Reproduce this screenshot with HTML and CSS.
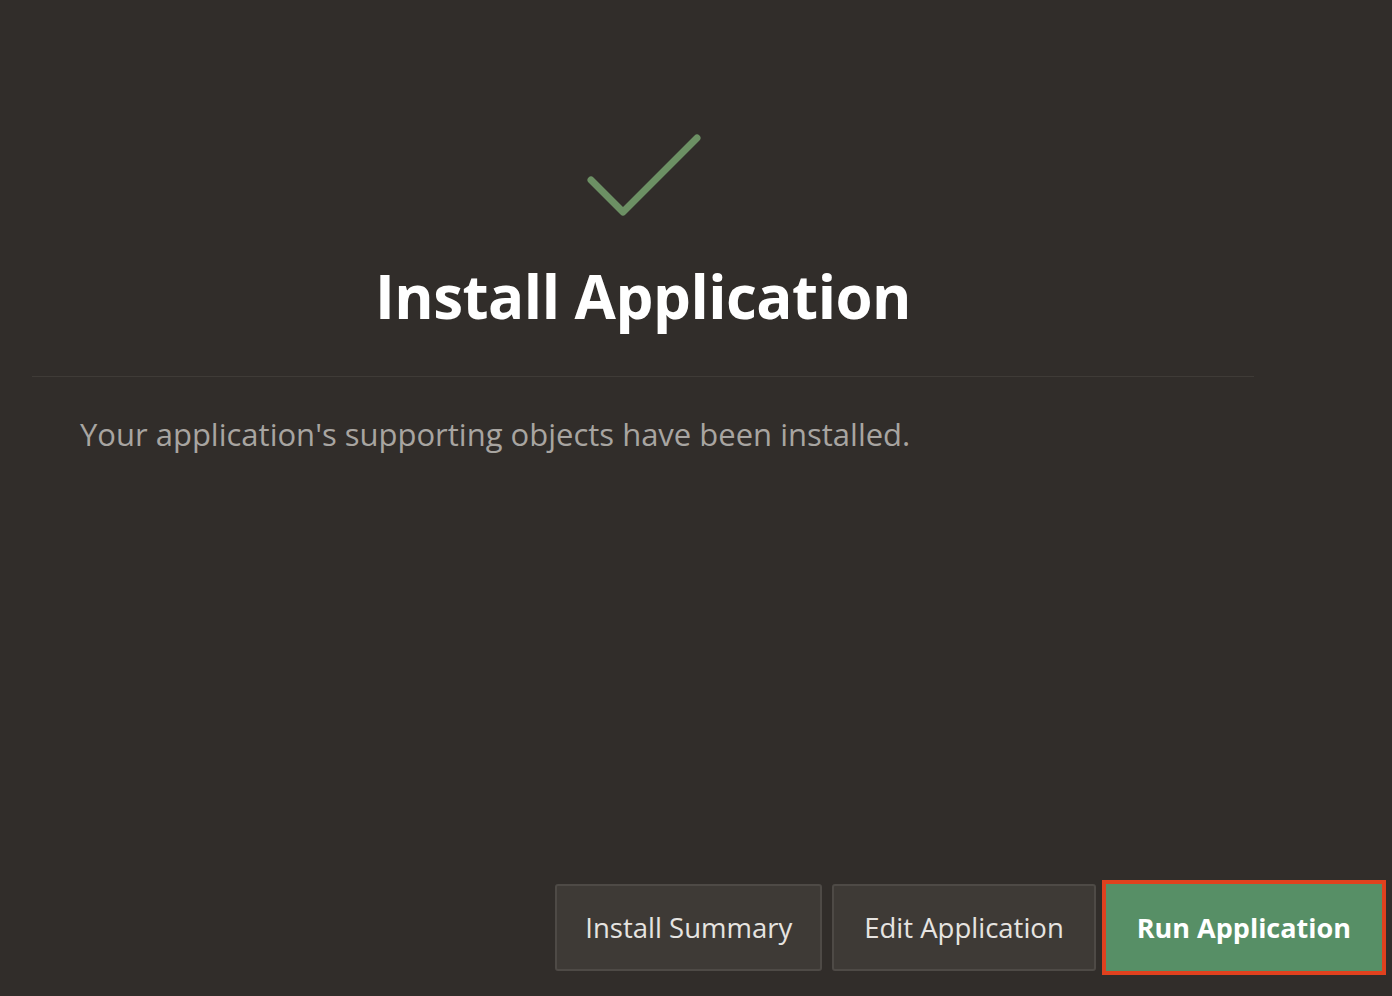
FILE: index.html
```html
<!DOCTYPE html>
<html>
<head>
<meta charset="utf-8">
<link rel="stylesheet" href="styles.css">
</head>
<body>
<div class="page">
  <div class="panel">
    <div class="header">
      <svg class="check" width="120" height="90" viewBox="0 0 120 90">
        <polyline points="7,53 39,85 113,11" fill="none" stroke="#6c9064" stroke-width="7" stroke-linecap="round" stroke-linejoin="round"/>
      </svg>
      <h1 class="title">Install Application</h1>
    </div>
    <p class="message">Your application's supporting objects have been installed.</p>
  </div>
  <div class="footer">
    <button class="btn btn-summary">Install Summary</button>
    <button class="btn">Edit Application</button>
    <button class="btn btn-primary">Run Application</button>
  </div>
</div>
</body>
</html>
```
FILE: styles.css
```css
html, body {
  margin: 0;
  padding: 0;
  background: #312d2a;
  height: 100%;
}
body {
  font-family: "Open Sans", "Noto Sans", sans-serif;
}
.page {
  height: 996px;
  display: flex;
  flex-direction: column;
}
.panel {
  margin-left: 32px;
  width: 1222px;
  flex: 1;
}
.header {
  display: flex;
  flex-direction: column;
  align-items: center;
  padding: 127px 0 50px 0;
  border-bottom: 1px solid #3f3b37;
}
.check {
  display: block;
  flex-shrink: 0;
  margin-left: 2px;
}
.title {
  margin: 49px 0 0 0;
  color: #ffffff;
  font-size: 60px;
  font-weight: 700;
  line-height: 60px;
  letter-spacing: -0.5px;
}
.message {
  margin: 37px 0 0 48px;
  color: #a8a5a1;
  font-size: 31px;
  line-height: 40px;
}
.footer {
  display: flex;
  justify-content: flex-end;
  align-items: center;
  gap: 10px;
  padding: 0 10px 25px 0;
}
.btn {
  font-family: "Open Sans", "Noto Sans", sans-serif;
  height: 87px;
  padding: 0 30px;
  background: #3e3a36;
  border: 2px solid #4e4a46;
  border-radius: 3px;
  color: #e6e4e1;
  font-size: 27.5px;
}
.btn-summary {
  padding: 0 28px;
}
.btn-primary {
  background: #578f66;
  border: 1px solid #578f66;
  border-radius: 0;
  outline: 4px solid #e0411e;
  outline-offset: 0;
  color: #ffffff;
  font-weight: 700;
  font-size: 27px;
  padding: 0 30px;
}
```
